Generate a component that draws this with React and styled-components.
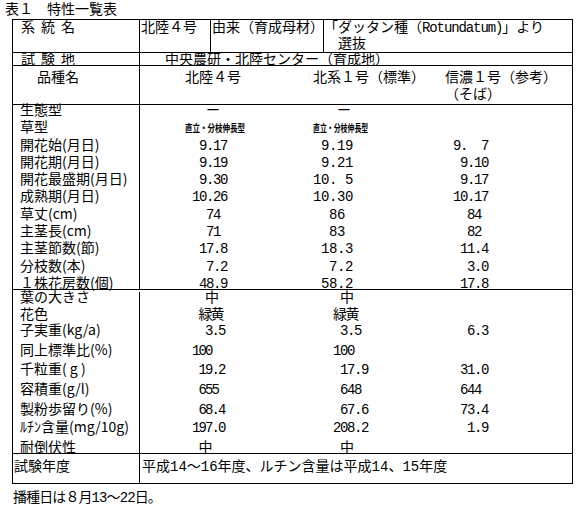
import React from "react";
import styled, { createGlobalStyle } from "styled-components";

const GOTHIC = `"Noto Sans CJK JP", "Noto Sans", sans-serif`;
const MONO = `"Liberation Mono", "Noto Sans CJK JP", monospace`;

const GlobalStyle = createGlobalStyle`
  html, body {
    margin: 0;
    padding: 0;
    background: #ffffff;
  }
  body {
    color: #000000;
    font-family: ${GOTHIC};
    font-size: 14px;
  }
`;

const Page = styled.div`
  width: 578px;
  height: 507px;
  overflow: hidden;
`;

const Title = styled.div`
  padding-left: 5px;
  line-height: 17px;
  margin-bottom: 2px;
  white-space: pre;
`;

const Sheet = styled.div`
  box-sizing: border-box;
  width: 561px;
  margin-left: 12px;
  border: 1px solid #000;
`;

// a horizontal band of the sheet (header rows, year row)
const Band = styled.div`
  box-sizing: border-box;
  display: grid;
  grid-template-columns: ${(p) => p.$cols};
  height: ${(p) => p.$h}px;
  border-bottom: ${(p) => (p.$open ? "none" : "1px solid #000")};
`;

// a group of data rows closed by a rule
const Section = styled.div`
  box-sizing: border-box;
  display: flex;
  flex-direction: column;
  height: ${(p) => p.$h}px;
  padding-top: ${(p) => p.$pt || 0}px;
  border-bottom: 1px solid #000;
`;

const DataRow = styled.div`
  display: grid;
  grid-template-columns: 127px 173px 140px 1fr;
  min-height: 0;
  height: ${(p) => (p.$h ? `${p.$h}px` : "auto")};
  flex: ${(p) => (p.$h ? "none" : "1")};
  line-height: 9px;
`;

const Cell = styled.div`
  box-sizing: border-box;
  min-width: 0;
  margin-top: ${(p) => p.$mt || 0}px;
  padding-top: ${(p) => p.$pt || 0}px;
  padding-left: ${(p) => p.$pl || 0}px;
  line-height: ${(p) => (p.$lh ? `${p.$lh}px` : "inherit")};
  letter-spacing: ${(p) => p.$ls || 0}px;
  border-right: ${(p) => (p.$rule ? "1px solid #000" : "none")};
  white-space: pre;
`;

const Label = styled(Cell).attrs({ $rule: true })``;

const Value = styled.div`
  padding-left: ${(p) => p.$pl || 0}px;
  white-space: pre;
`;

// half-width figures, set on a fixed pitch so columns line up on spaces
const Mono = styled.span`
  font-family: ${MONO};
  line-height: 10px;
  letter-spacing: ${(p) => ((p.$pitch || 8.4) - 8.4).toFixed(2)}px;
`;

const Squeeze = styled.span`
  display: inline-block;
  font-size: 10px;
  font-weight: 700;
  line-height: 10px;
  transform: scaleX(${(p) => p.$scale || 0.72});
  transform-origin: left center;
  margin-left: ${(p) => p.$shift || 0}px;
`;

const Note = styled.div`
  margin-top: 6px;
  padding-left: 13px;
  line-height: 12px;
  white-space: pre;
`;

const PLANT_TYPE = "直立・分枝伸長型";

const BLOCK1 = {
  h: 185,
  pt: 0,
  pads: [52, 0, 0],
  pitches: [7, 8, 7],
  heights: [17.3, 17.3, 17.3, 17.3, 17.3, 17.3, 17.3, 17.3, 17.3, 17.3, 0],
  rows: [
    { label: "生態型", v: ["  ー", "   ー", ""] },
    { label: "草型", shape: true },
    { label: "開花始(月日)", v: [" 9.17", " 9.19", "9.  7"] },
    { label: "開花期(月日)", v: [" 9.19", " 9.21", " 9.10"] },
    { label: "開花最盛期(月日)", v: [" 9.30", "10. 5", " 9.17"] },
    { label: "成熟期(月日)", v: ["10.26", "10.30", "10.17"] },
    { label: "草丈(cm)", v: ["  74", "  86", "  84"] },
    { label: "主茎長(cm)", v: ["  71", "  83", "  82"] },
    { label: "主茎節数(節)", v: [" 17.8", " 18.3", " 11.4"] },
    { label: "分枝数(本)", v: ["  7.2", "  7.2", "  3.0"] },
    { label: "１株花房数(個)", v: [" 48.9", " 58.2", " 17.8"] },
  ],
};

const BLOCK2 = {
  h: 164,
  pt: 1.75,
  pads: [52, 20, 0],
  pitches: [6.5, 7, 7],
  heights: [17, 16, 20, 19, 20, 20, 18, 20, 0],
  rows: [
    { label: "葉の大きさ", v: ["  中", " 中", ""] },
    { label: "花色", v: [" 緑黄", "緑黄", ""] },
    { label: "子実重(kg/a)", v: ["  3.5", " 3.5", "  6.3"] },
    { label: "同上標準比(%)", v: ["100", "100", ""] },
    { label: "千粒重( g )", v: [" 19.2", " 17.9", " 31.0"] },
    { label: "容積重(g/l)", v: [" 655", " 648", " 644"] },
    { label: "製粉歩留り(%)", v: [" 68.4", " 67.6", " 73.4"] },
    { label: "ﾙﾁﾝ含量(mg/10g)", v: ["197.0", "208.2", "  1.9"] },
    { label: "耐倒伏性", v: [" 中", " 中", ""] },
  ],
};

const Block = ({ block }) => (
  <Section $h={block.h} $pt={block.pt}>
    {block.rows.map((row, i) => (
      <DataRow key={row.label} $h={block.heights[i]}>
        <Label $pl={7}>{row.label}</Label>
        {row.shape ? (
          <>
            <Value $pl={block.pads[0]}>
              <Squeeze $shift={-7} $scale={0.75}>{PLANT_TYPE}</Squeeze>
            </Value>
            <Value $pl={block.pads[1]}>
              <Squeeze $scale={0.69}>{PLANT_TYPE}</Squeeze>
            </Value>
            <Value />
          </>
        ) : (
          row.v.map((text, j) => (
            <Value key={j} $pl={block.pads[j]}>
              <Mono $pitch={block.pitches[j]}>{text}</Mono>
            </Value>
          ))
        )}
      </DataRow>
    ))}
  </Section>
);

export default function App() {
  return (
    <Page>
      <GlobalStyle />
      <Title>表１　特性一覧表</Title>
      <Sheet>
        <Band $cols="127px 71px 113px 1fr" $h={33}>
          <Label $pl={8} $lh={12} $ls={6}>系統名</Label>
          <Cell $rule $pl={1} $lh={12}>北陸４号</Cell>
          <Cell $rule $pl={1} $lh={12}>由来（育成母材）</Cell>
          <Cell $mt={-2} $lh={16}>
            「ダッタン種（<Mono $pitch={7.3}>Rotundatum)</Mono>」より
            {"\n"}
            {"　選抜"}
          </Cell>
        </Band>
        <Band $cols="127px 1fr" $h={13}>
          <Label $pl={8} $lh={11} $ls={6}>試験地</Label>
          <Cell $pl={25} $lh={11}>中央農研・北陸センター（育成地）</Cell>
        </Band>
        <Band $cols="127px 173px 132px 1fr" $h={39}>
          <Label $pl={24} $pt={2} $lh={17}>品種名</Label>
          <Cell $pl={45} $pt={2} $lh={17}>北陸４号</Cell>
          <Cell $pt={2} $lh={17}>北系１号（標準）</Cell>
          <Cell $pt={2} $lh={17}>{"信濃１号（参考）\n（そば）"}</Cell>
        </Band>
        <Block block={BLOCK1} />
        <Block block={BLOCK2} />
        <Band $cols="127px 1fr" $h={29} $open>
          <Label $pl={1} $pt={5} $lh={12}>試験年度</Label>
          <Cell $pl={2} $pt={5} $lh={12}>
            <Mono>平成14～16年度、ルチン含量は平成14、15年度</Mono>
          </Cell>
        </Band>
      </Sheet>
      <Note>
        <Mono $pitch={7.5}>播種日は８月13～22日。</Mono>
      </Note>
    </Page>
  );
}
